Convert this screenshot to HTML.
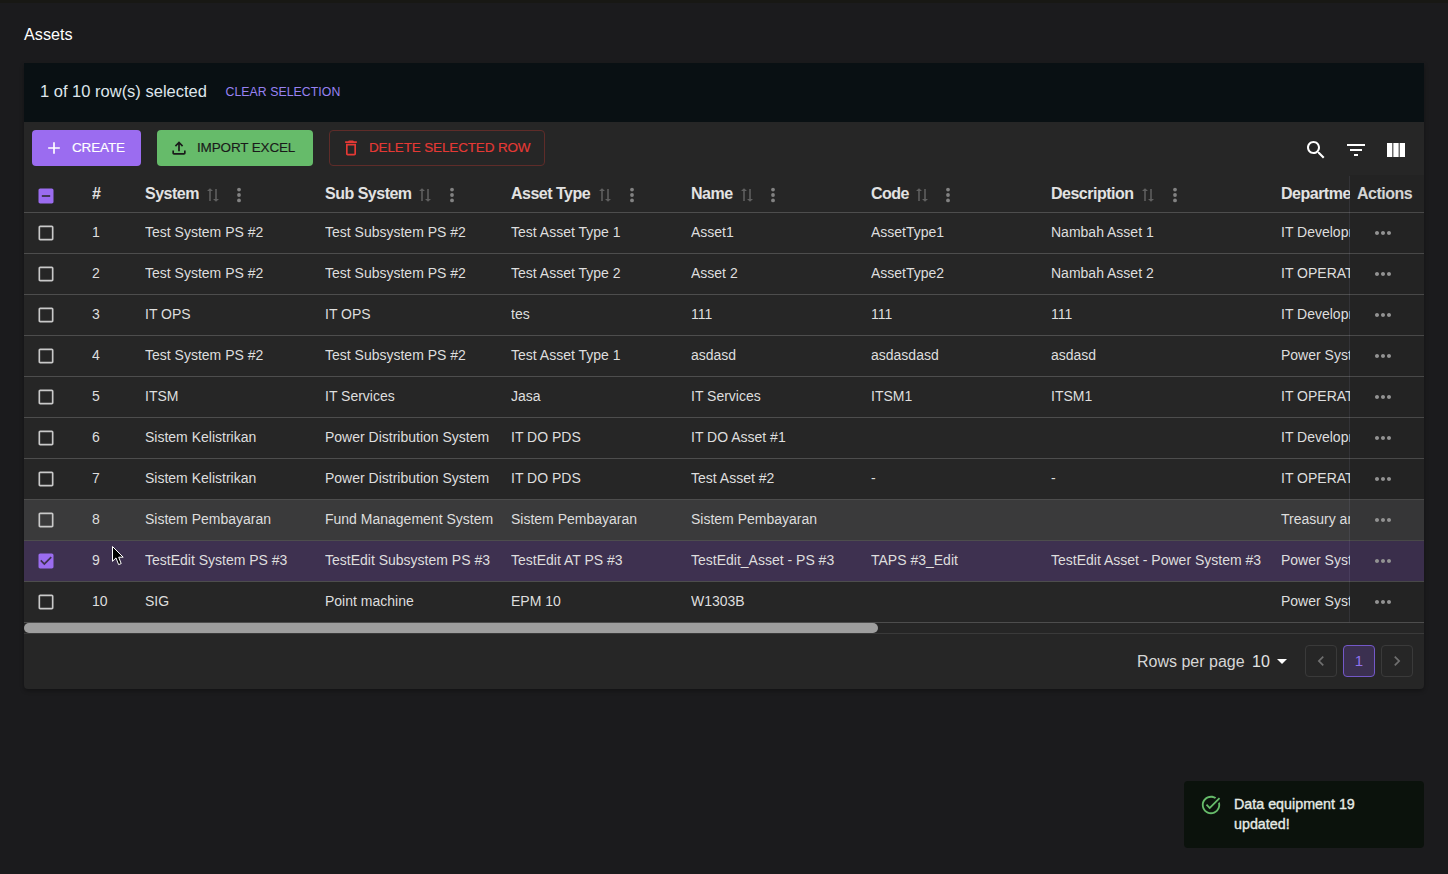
<!DOCTYPE html><html><head><meta charset="utf-8"><style>
*{box-sizing:border-box;margin:0;padding:0}
html,body{width:1448px;height:874px;overflow:hidden}
body{background:#1b1b1d;font-family:"Liberation Sans",sans-serif;color:#e4e4e4;position:relative}
.a{position:absolute}
#topstrip{left:0;top:0;width:1448px;height:3px;background:#181814}
#title{left:24px;top:24px;font-size:16.2px;line-height:20px;color:#fff}
#paper{left:24px;top:63px;width:1400px;height:626px;background:#262626;border-radius:0 0 4px 4px;box-shadow:0 2px 4px rgba(0,0,0,.3)}
#banner{left:24px;top:63px;width:1400px;height:59px;background:#091013}
#selt{left:40px;top:81px;font-size:16.5px;line-height:20px;color:#dfe6ec;white-space:nowrap}
#clr{left:225.5px;top:84px;font-size:12.3px;line-height:16px;color:#9882f2;letter-spacing:0.05px;white-space:nowrap}
.btn{top:130px;height:36px;border-radius:4px;font-size:13.5px;letter-spacing:-0.15px;line-height:35px;white-space:nowrap}
#b1{left:32px;width:109px;background:#9b6cf0;color:#fff;-webkit-text-stroke:0.15px #fff}
#b2{left:157px;width:156px;background:#66bb6a;color:#1a1a1a;-webkit-text-stroke:0.15px #1a1a1a}
#b3{left:329px;width:216px;border:1px solid #5f2c29;color:#e53935;line-height:33px;-webkit-text-stroke:0.15px #e53935}
.hc{top:175px;height:37px;line-height:37px;font-size:16px;letter-spacing:-0.5px;font-weight:bold;color:#e2e2e2;white-space:nowrap;overflow:hidden}
.hline{left:24px;width:1400px;height:1px;background:#4d4d4d}
.rw{left:24px;width:1400px;height:40px}
.hov{background:#3a3a3b}
.sel{background:#3e3150}
.c{height:40px;line-height:40px;font-size:14px;white-space:nowrap;overflow:hidden;color:#dedede}
#actsep{left:1349px;top:176px;width:1px;height:446px;background:rgba(190,190,230,0.09)}
#sbtrack{left:24px;top:633px;width:1400px;height:1px;background:#3a3a3a}
#sbthumb{left:24px;top:623px;width:854px;height:10px;background:#9e9e9e;border-radius:5px}
#rpp{left:1137px;top:652px;font-size:16px;line-height:20px;color:#d6d6d6;white-space:nowrap}
#rppv{left:1252px;top:652px;font-size:16px;line-height:20px;color:#e4e4e4}
.pb{top:645px;width:32px;height:32px;border:1px solid #3a3a3a;border-radius:4px;font-size:15px;line-height:30px;text-align:center}
.pb.cur{background:#3b3050;border-color:#7358c8;color:#8f72ee}
#toast{left:1184px;top:781px;width:240px;height:67px;background:#0b120c;border-radius:4px}
#toastt{left:1234px;top:794px;font-size:14.3px;line-height:20px;color:#e6ebe6;-webkit-text-stroke:0.35px #e6ebe6}
#actbg{left:1350px;top:175px;width:74px;height:447px;background:rgba(0,0,0,0.06)}

</style></head><body>
<div class="a" id="topstrip"></div>
<div class="a" id="title">Assets</div>
<div class="a" id="paper"></div>
<div class="a" id="banner"></div>
<div class="a" id="selt">1 of 10 row(s) selected</div>
<div class="a" id="clr">CLEAR SELECTION</div>
<div class="a btn" id="b1"><svg class="a" style="left:12px;top:8px" width="20" height="20" viewBox="0 0 24 24"><path fill="#fff" d="M19 13h-6v6h-2v-6H5v-2h6V5h2v6h6v2z"/></svg><span class="a tx" style="left:40px">CREATE</span></div>
<div class="a btn" id="b2"><svg class="a" style="left:12px;top:8px" width="20" height="20" viewBox="0 0 24 24"><path fill="#1a1a1a" d="M18 15v3H6v-3H4v3c0 1.1.9 2 2 2h12c1.1 0 2-.9 2-2v-3h-2zM7 9l1.41 1.41L11 7.83V16h2V7.83l2.59 2.58L17 9l-5-5-5 5z"/></svg><span class="a tx" style="left:40px">IMPORT EXCEL</span></div>
<div class="a btn" id="b3"><svg class="a" style="left:11px;top:7px" width="20" height="20" viewBox="0 0 24 24"><path fill="#e53935" d="M6 19c0 1.1.9 2 2 2h8c1.1 0 2-.9 2-2V7H6v12zM8 9h8v10H8V9zm7.5-5l-1-1h-5l-1 1H5v2h14V4z"/></svg><span class="a tx" style="left:39px">DELETE SELECTED ROW</span></div>
<svg class="a" style="left:1304px;top:138px" width="24" height="24" viewBox="0 0 24 24"><path fill="#fff" d="M15.5 14h-.79l-.28-.27C15.41 12.59 16 11.11 16 9.5 16 5.91 13.09 3 9.5 3S3 5.91 3 9.5 5.91 16 9.5 16c1.61 0 3.09-.59 4.23-1.57l.27.28v.79l5 4.99L20.49 19l-4.99-5zm-6 0C7.01 14 5 11.99 5 9.5S7.01 5 9.5 5 14 7.01 14 9.5 11.99 14 9.5 14z"/></svg>
<svg class="a" style="left:1344px;top:138px" width="24" height="24" viewBox="0 0 24 24"><path fill="#fff" d="M10 18h4v-2h-4v2zM3 6v2h18V6H3zm3 7h12v-2H6v2z"/></svg>
<svg class="a" style="left:1384px;top:138px" width="24" height="24" viewBox="0 0 24 24"><path fill="#fff" d="M14.67 5v14H9.33V5h5.34zm1 14H21V5h-5.33v14zm-7.34 0V5H3v14h5.33z"/></svg>
<svg class="a" style="left:36px;top:185.5px" width="20" height="20" viewBox="0 0 24 24"><path fill="#9b6cf0" d="M19 3H5c-1.1 0-2 .9-2 2v14c0 1.1.9 2 2 2h14c1.1 0 2-.9 2-2V5c0-1.1-.9-2-2-2zm-2 10H7v-2h10v2z"/></svg>
<div class="a hc" style="left:92px;width:50px">#</div>
<div class="a hc" style="left:145px;width:175px">System</div>
<svg class="a" style="left:203.9px;top:185.9px" width="18" height="18" viewBox="0 0 24 24"><g transform="rotate(-90 12 12) translate(12 12) scale(0.9 1) translate(-12 -12)"><path fill="rgba(255,255,255,0.27)" d="m18 12 4-4-4-4v3H3v2h15zM6 12l-4 4 4 4v-3h15v-2H6z"/></g></svg>
<svg class="a" style="left:236.2px;top:186px" width="6" height="18" viewBox="0 0 6 18"><circle cx="3" cy="3.6" r="1.9" fill="#828282"/><circle cx="3" cy="9" r="1.9" fill="#828282"/><circle cx="3" cy="14.4" r="1.9" fill="#828282"/></svg>
<div class="a hc" style="left:325px;width:183px">Sub System</div>
<svg class="a" style="left:416.0px;top:185.9px" width="18" height="18" viewBox="0 0 24 24"><g transform="rotate(-90 12 12) translate(12 12) scale(0.9 1) translate(-12 -12)"><path fill="rgba(255,255,255,0.27)" d="m18 12 4-4-4-4v3H3v2h15zM6 12l-4 4 4 4v-3h15v-2H6z"/></g></svg>
<svg class="a" style="left:448.9px;top:186px" width="6" height="18" viewBox="0 0 6 18"><circle cx="3" cy="3.6" r="1.9" fill="#828282"/><circle cx="3" cy="9" r="1.9" fill="#828282"/><circle cx="3" cy="14.4" r="1.9" fill="#828282"/></svg>
<div class="a hc" style="left:511px;width:175px">Asset Type</div>
<svg class="a" style="left:596.3px;top:185.9px" width="18" height="18" viewBox="0 0 24 24"><g transform="rotate(-90 12 12) translate(12 12) scale(0.9 1) translate(-12 -12)"><path fill="rgba(255,255,255,0.27)" d="m18 12 4-4-4-4v3H3v2h15zM6 12l-4 4 4 4v-3h15v-2H6z"/></g></svg>
<svg class="a" style="left:628.8px;top:186px" width="6" height="18" viewBox="0 0 6 18"><circle cx="3" cy="3.6" r="1.9" fill="#828282"/><circle cx="3" cy="9" r="1.9" fill="#828282"/><circle cx="3" cy="14.4" r="1.9" fill="#828282"/></svg>
<div class="a hc" style="left:691px;width:175px">Name</div>
<svg class="a" style="left:738.4px;top:185.9px" width="18" height="18" viewBox="0 0 24 24"><g transform="rotate(-90 12 12) translate(12 12) scale(0.9 1) translate(-12 -12)"><path fill="rgba(255,255,255,0.27)" d="m18 12 4-4-4-4v3H3v2h15zM6 12l-4 4 4 4v-3h15v-2H6z"/></g></svg>
<svg class="a" style="left:770.0px;top:186px" width="6" height="18" viewBox="0 0 6 18"><circle cx="3" cy="3.6" r="1.9" fill="#828282"/><circle cx="3" cy="9" r="1.9" fill="#828282"/><circle cx="3" cy="14.4" r="1.9" fill="#828282"/></svg>
<div class="a hc" style="left:871px;width:175px">Code</div>
<svg class="a" style="left:913.2px;top:185.9px" width="18" height="18" viewBox="0 0 24 24"><g transform="rotate(-90 12 12) translate(12 12) scale(0.9 1) translate(-12 -12)"><path fill="rgba(255,255,255,0.27)" d="m18 12 4-4-4-4v3H3v2h15zM6 12l-4 4 4 4v-3h15v-2H6z"/></g></svg>
<svg class="a" style="left:945.0px;top:186px" width="6" height="18" viewBox="0 0 6 18"><circle cx="3" cy="3.6" r="1.9" fill="#828282"/><circle cx="3" cy="9" r="1.9" fill="#828282"/><circle cx="3" cy="14.4" r="1.9" fill="#828282"/></svg>
<div class="a hc" style="left:1051px;width:225px">Description</div>
<svg class="a" style="left:1139.0px;top:185.9px" width="18" height="18" viewBox="0 0 24 24"><g transform="rotate(-90 12 12) translate(12 12) scale(0.9 1) translate(-12 -12)"><path fill="rgba(255,255,255,0.27)" d="m18 12 4-4-4-4v3H3v2h15zM6 12l-4 4 4 4v-3h15v-2H6z"/></g></svg>
<svg class="a" style="left:1171.8px;top:186px" width="6" height="18" viewBox="0 0 6 18"><circle cx="3" cy="3.6" r="1.9" fill="#828282"/><circle cx="3" cy="9" r="1.9" fill="#828282"/><circle cx="3" cy="14.4" r="1.9" fill="#828282"/></svg>
<div class="a hc" style="left:1281px;width:68.6px">Departme</div>
<div class="a hc" style="left:1357px;width:62px">Actions</div>
<div class="a hline" style="top:212px"></div>
<div class="a rw" style="top:213px"></div>
<svg class="a" style="left:36px;top:223px" width="20" height="20" viewBox="0 0 24 24"><path fill="#c9c9c9" d="M19 5v14H5V5h14m0-2H5c-1.11 0-2 .9-2 2v14c0 1.1.89 2 2 2h14c1.1 0 2-.9 2-2V5c0-1.1-.9-2-2-2z"/></svg>
<div class="a c" style="top:212px;left:92px;width:50px">1</div>
<div class="a c" style="top:212px;left:145px;width:175px">Test System PS #2</div>
<div class="a c" style="top:212px;left:325px;width:183px">Test Subsystem PS #2</div>
<div class="a c" style="top:212px;left:511px;width:175px">Test Asset Type 1</div>
<div class="a c" style="top:212px;left:691px;width:175px">Asset1</div>
<div class="a c" style="top:212px;left:871px;width:175px">AssetType1</div>
<div class="a c" style="top:212px;left:1051px;width:225px">Nambah Asset 1</div>
<div class="a c" style="top:212px;left:1281px;width:68.6px">IT Development</div>
<svg class="a" style="left:1371px;top:221px" width="24" height="24" viewBox="0 0 24 24"><path fill="#9c9c9c" d="M6 10c-1.1 0-2 .9-2 2s.9 2 2 2 2-.9 2-2-.9-2-2-2zm12 0c-1.1 0-2 .9-2 2s.9 2 2 2 2-.9 2-2-.9-2-2-2zm-6 0c-1.1 0-2 .9-2 2s.9 2 2 2 2-.9 2-2-.9-2-2-2z"/></svg>
<div class="a hline" style="top:253px"></div>
<div class="a rw" style="top:254px"></div>
<svg class="a" style="left:36px;top:264px" width="20" height="20" viewBox="0 0 24 24"><path fill="#c9c9c9" d="M19 5v14H5V5h14m0-2H5c-1.11 0-2 .9-2 2v14c0 1.1.89 2 2 2h14c1.1 0 2-.9 2-2V5c0-1.1-.9-2-2-2z"/></svg>
<div class="a c" style="top:253px;left:92px;width:50px">2</div>
<div class="a c" style="top:253px;left:145px;width:175px">Test System PS #2</div>
<div class="a c" style="top:253px;left:325px;width:183px">Test Subsystem PS #2</div>
<div class="a c" style="top:253px;left:511px;width:175px">Test Asset Type 2</div>
<div class="a c" style="top:253px;left:691px;width:175px">Asset 2</div>
<div class="a c" style="top:253px;left:871px;width:175px">AssetType2</div>
<div class="a c" style="top:253px;left:1051px;width:225px">Nambah Asset 2</div>
<div class="a c" style="top:253px;left:1281px;width:68.6px">IT OPERATION</div>
<svg class="a" style="left:1371px;top:262px" width="24" height="24" viewBox="0 0 24 24"><path fill="#9c9c9c" d="M6 10c-1.1 0-2 .9-2 2s.9 2 2 2 2-.9 2-2-.9-2-2-2zm12 0c-1.1 0-2 .9-2 2s.9 2 2 2 2-.9 2-2-.9-2-2-2zm-6 0c-1.1 0-2 .9-2 2s.9 2 2 2 2-.9 2-2-.9-2-2-2z"/></svg>
<div class="a hline" style="top:294px"></div>
<div class="a rw" style="top:295px"></div>
<svg class="a" style="left:36px;top:305px" width="20" height="20" viewBox="0 0 24 24"><path fill="#c9c9c9" d="M19 5v14H5V5h14m0-2H5c-1.11 0-2 .9-2 2v14c0 1.1.89 2 2 2h14c1.1 0 2-.9 2-2V5c0-1.1-.9-2-2-2z"/></svg>
<div class="a c" style="top:294px;left:92px;width:50px">3</div>
<div class="a c" style="top:294px;left:145px;width:175px">IT OPS</div>
<div class="a c" style="top:294px;left:325px;width:183px">IT OPS</div>
<div class="a c" style="top:294px;left:511px;width:175px">tes</div>
<div class="a c" style="top:294px;left:691px;width:175px">111</div>
<div class="a c" style="top:294px;left:871px;width:175px">111</div>
<div class="a c" style="top:294px;left:1051px;width:225px">111</div>
<div class="a c" style="top:294px;left:1281px;width:68.6px">IT Development</div>
<svg class="a" style="left:1371px;top:303px" width="24" height="24" viewBox="0 0 24 24"><path fill="#9c9c9c" d="M6 10c-1.1 0-2 .9-2 2s.9 2 2 2 2-.9 2-2-.9-2-2-2zm12 0c-1.1 0-2 .9-2 2s.9 2 2 2 2-.9 2-2-.9-2-2-2zm-6 0c-1.1 0-2 .9-2 2s.9 2 2 2 2-.9 2-2-.9-2-2-2z"/></svg>
<div class="a hline" style="top:335px"></div>
<div class="a rw" style="top:336px"></div>
<svg class="a" style="left:36px;top:346px" width="20" height="20" viewBox="0 0 24 24"><path fill="#c9c9c9" d="M19 5v14H5V5h14m0-2H5c-1.11 0-2 .9-2 2v14c0 1.1.89 2 2 2h14c1.1 0 2-.9 2-2V5c0-1.1-.9-2-2-2z"/></svg>
<div class="a c" style="top:335px;left:92px;width:50px">4</div>
<div class="a c" style="top:335px;left:145px;width:175px">Test System PS #2</div>
<div class="a c" style="top:335px;left:325px;width:183px">Test Subsystem PS #2</div>
<div class="a c" style="top:335px;left:511px;width:175px">Test Asset Type 1</div>
<div class="a c" style="top:335px;left:691px;width:175px">asdasd</div>
<div class="a c" style="top:335px;left:871px;width:175px">asdasdasd</div>
<div class="a c" style="top:335px;left:1051px;width:225px">asdasd</div>
<div class="a c" style="top:335px;left:1281px;width:68.6px">Power System</div>
<svg class="a" style="left:1371px;top:344px" width="24" height="24" viewBox="0 0 24 24"><path fill="#9c9c9c" d="M6 10c-1.1 0-2 .9-2 2s.9 2 2 2 2-.9 2-2-.9-2-2-2zm12 0c-1.1 0-2 .9-2 2s.9 2 2 2 2-.9 2-2-.9-2-2-2zm-6 0c-1.1 0-2 .9-2 2s.9 2 2 2 2-.9 2-2-.9-2-2-2z"/></svg>
<div class="a hline" style="top:376px"></div>
<div class="a rw" style="top:377px"></div>
<svg class="a" style="left:36px;top:387px" width="20" height="20" viewBox="0 0 24 24"><path fill="#c9c9c9" d="M19 5v14H5V5h14m0-2H5c-1.11 0-2 .9-2 2v14c0 1.1.89 2 2 2h14c1.1 0 2-.9 2-2V5c0-1.1-.9-2-2-2z"/></svg>
<div class="a c" style="top:376px;left:92px;width:50px">5</div>
<div class="a c" style="top:376px;left:145px;width:175px">ITSM</div>
<div class="a c" style="top:376px;left:325px;width:183px">IT Services</div>
<div class="a c" style="top:376px;left:511px;width:175px">Jasa</div>
<div class="a c" style="top:376px;left:691px;width:175px">IT Services</div>
<div class="a c" style="top:376px;left:871px;width:175px">ITSM1</div>
<div class="a c" style="top:376px;left:1051px;width:225px">ITSM1</div>
<div class="a c" style="top:376px;left:1281px;width:68.6px">IT OPERATION</div>
<svg class="a" style="left:1371px;top:385px" width="24" height="24" viewBox="0 0 24 24"><path fill="#9c9c9c" d="M6 10c-1.1 0-2 .9-2 2s.9 2 2 2 2-.9 2-2-.9-2-2-2zm12 0c-1.1 0-2 .9-2 2s.9 2 2 2 2-.9 2-2-.9-2-2-2zm-6 0c-1.1 0-2 .9-2 2s.9 2 2 2 2-.9 2-2-.9-2-2-2z"/></svg>
<div class="a hline" style="top:417px"></div>
<div class="a rw" style="top:418px"></div>
<svg class="a" style="left:36px;top:428px" width="20" height="20" viewBox="0 0 24 24"><path fill="#c9c9c9" d="M19 5v14H5V5h14m0-2H5c-1.11 0-2 .9-2 2v14c0 1.1.89 2 2 2h14c1.1 0 2-.9 2-2V5c0-1.1-.9-2-2-2z"/></svg>
<div class="a c" style="top:417px;left:92px;width:50px">6</div>
<div class="a c" style="top:417px;left:145px;width:175px">Sistem Kelistrikan</div>
<div class="a c" style="top:417px;left:325px;width:183px">Power Distribution System</div>
<div class="a c" style="top:417px;left:511px;width:175px">IT DO PDS</div>
<div class="a c" style="top:417px;left:691px;width:175px">IT DO Asset #1</div>
<div class="a c" style="top:417px;left:1281px;width:68.6px">IT Development</div>
<svg class="a" style="left:1371px;top:426px" width="24" height="24" viewBox="0 0 24 24"><path fill="#9c9c9c" d="M6 10c-1.1 0-2 .9-2 2s.9 2 2 2 2-.9 2-2-.9-2-2-2zm12 0c-1.1 0-2 .9-2 2s.9 2 2 2 2-.9 2-2-.9-2-2-2zm-6 0c-1.1 0-2 .9-2 2s.9 2 2 2 2-.9 2-2-.9-2-2-2z"/></svg>
<div class="a hline" style="top:458px"></div>
<div class="a rw" style="top:459px"></div>
<svg class="a" style="left:36px;top:469px" width="20" height="20" viewBox="0 0 24 24"><path fill="#c9c9c9" d="M19 5v14H5V5h14m0-2H5c-1.11 0-2 .9-2 2v14c0 1.1.89 2 2 2h14c1.1 0 2-.9 2-2V5c0-1.1-.9-2-2-2z"/></svg>
<div class="a c" style="top:458px;left:92px;width:50px">7</div>
<div class="a c" style="top:458px;left:145px;width:175px">Sistem Kelistrikan</div>
<div class="a c" style="top:458px;left:325px;width:183px">Power Distribution System</div>
<div class="a c" style="top:458px;left:511px;width:175px">IT DO PDS</div>
<div class="a c" style="top:458px;left:691px;width:175px">Test Asset #2</div>
<div class="a c" style="top:458px;left:871px;width:175px">-</div>
<div class="a c" style="top:458px;left:1051px;width:225px">-</div>
<div class="a c" style="top:458px;left:1281px;width:68.6px">IT OPERATION</div>
<svg class="a" style="left:1371px;top:467px" width="24" height="24" viewBox="0 0 24 24"><path fill="#9c9c9c" d="M6 10c-1.1 0-2 .9-2 2s.9 2 2 2 2-.9 2-2-.9-2-2-2zm12 0c-1.1 0-2 .9-2 2s.9 2 2 2 2-.9 2-2-.9-2-2-2zm-6 0c-1.1 0-2 .9-2 2s.9 2 2 2 2-.9 2-2-.9-2-2-2z"/></svg>
<div class="a hline" style="top:499px"></div>
<div class="a rw hov" style="top:500px"></div>
<svg class="a" style="left:36px;top:510px" width="20" height="20" viewBox="0 0 24 24"><path fill="#c9c9c9" d="M19 5v14H5V5h14m0-2H5c-1.11 0-2 .9-2 2v14c0 1.1.89 2 2 2h14c1.1 0 2-.9 2-2V5c0-1.1-.9-2-2-2z"/></svg>
<div class="a c" style="top:499px;left:92px;width:50px">8</div>
<div class="a c" style="top:499px;left:145px;width:175px">Sistem Pembayaran</div>
<div class="a c" style="top:499px;left:325px;width:183px">Fund Management System</div>
<div class="a c" style="top:499px;left:511px;width:175px">Sistem Pembayaran</div>
<div class="a c" style="top:499px;left:691px;width:175px">Sistem Pembayaran</div>
<div class="a c" style="top:499px;left:1281px;width:68.6px">Treasury and</div>
<svg class="a" style="left:1371px;top:508px" width="24" height="24" viewBox="0 0 24 24"><path fill="#9c9c9c" d="M6 10c-1.1 0-2 .9-2 2s.9 2 2 2 2-.9 2-2-.9-2-2-2zm12 0c-1.1 0-2 .9-2 2s.9 2 2 2 2-.9 2-2-.9-2-2-2zm-6 0c-1.1 0-2 .9-2 2s.9 2 2 2 2-.9 2-2-.9-2-2-2z"/></svg>
<div class="a hline" style="top:540px"></div>
<div class="a rw sel" style="top:541px"></div>
<svg class="a" style="left:36px;top:551px" width="20" height="20" viewBox="0 0 24 24"><path fill="#9b6cf0" d="M19 3H5c-1.11 0-2 .9-2 2v14c0 1.1.89 2 2 2h14c1.11 0 2-.9 2-2V5c0-1.1-.89-2-2-2zm-9 14l-5-5 1.41-1.41L10 14.17l7.59-7.59L19 8l-9 9z"/></svg>
<div class="a c" style="top:540px;left:92px;width:50px">9</div>
<div class="a c" style="top:540px;left:145px;width:175px">TestEdit System PS #3</div>
<div class="a c" style="top:540px;left:325px;width:183px">TestEdit Subsystem PS #3</div>
<div class="a c" style="top:540px;left:511px;width:175px">TestEdit AT PS #3</div>
<div class="a c" style="top:540px;left:691px;width:175px">TestEdit_Asset - PS #3</div>
<div class="a c" style="top:540px;left:871px;width:175px">TAPS #3_Edit</div>
<div class="a c" style="top:540px;left:1051px;width:225px">TestEdit Asset - Power System #3</div>
<div class="a c" style="top:540px;left:1281px;width:68.6px">Power System</div>
<svg class="a" style="left:1371px;top:549px" width="24" height="24" viewBox="0 0 24 24"><path fill="#9c9c9c" d="M6 10c-1.1 0-2 .9-2 2s.9 2 2 2 2-.9 2-2-.9-2-2-2zm12 0c-1.1 0-2 .9-2 2s.9 2 2 2 2-.9 2-2-.9-2-2-2zm-6 0c-1.1 0-2 .9-2 2s.9 2 2 2 2-.9 2-2-.9-2-2-2z"/></svg>
<div class="a hline" style="top:581px"></div>
<div class="a rw" style="top:582px"></div>
<svg class="a" style="left:36px;top:592px" width="20" height="20" viewBox="0 0 24 24"><path fill="#c9c9c9" d="M19 5v14H5V5h14m0-2H5c-1.11 0-2 .9-2 2v14c0 1.1.89 2 2 2h14c1.1 0 2-.9 2-2V5c0-1.1-.9-2-2-2z"/></svg>
<div class="a c" style="top:581px;left:92px;width:50px">10</div>
<div class="a c" style="top:581px;left:145px;width:175px">SIG</div>
<div class="a c" style="top:581px;left:325px;width:183px">Point machine</div>
<div class="a c" style="top:581px;left:511px;width:175px">EPM 10</div>
<div class="a c" style="top:581px;left:691px;width:175px">W1303B</div>
<div class="a c" style="top:581px;left:1281px;width:68.6px">Power System</div>
<svg class="a" style="left:1371px;top:590px" width="24" height="24" viewBox="0 0 24 24"><path fill="#9c9c9c" d="M6 10c-1.1 0-2 .9-2 2s.9 2 2 2 2-.9 2-2-.9-2-2-2zm12 0c-1.1 0-2 .9-2 2s.9 2 2 2 2-.9 2-2-.9-2-2-2zm-6 0c-1.1 0-2 .9-2 2s.9 2 2 2 2-.9 2-2-.9-2-2-2z"/></svg>
<div class="a hline" style="top:622px"></div>
<div class="a" id="actbg"></div>
<div class="a" id="actsep"></div>
<div class="a" id="sbtrack"></div>
<div class="a" id="sbthumb"></div>
<div class="a" id="rpp">Rows per page</div>
<div class="a" id="rppv">10</div>
<svg class="a" style="left:1270px;top:649px" width="24" height="24" viewBox="0 0 24 24"><path fill="#fff" d="M7 10l5 5 5-5z"/></svg>
<div class="a pb" style="left:1305px"><svg class="a" style="left:5px;top:5px" width="20" height="20" viewBox="0 0 24 24"><path d="M15.41 7.41L14 6l-6 6 6 6 1.41-1.41L10.83 12z" fill="#6f6f6f"/></svg></div>
<div class="a pb cur" style="left:1343px">1</div>
<div class="a pb" style="left:1381px"><svg class="a" style="left:5px;top:5px" width="20" height="20" viewBox="0 0 24 24"><path d="M10 6L8.59 7.41 13.17 12l-4.58 4.59L10 18l6-6z" fill="#6f6f6f"/></svg></div>
<div class="a" id="toast"></div>
<svg class="a" style="left:1199.6px;top:794px" width="22" height="22" viewBox="0 0 24 24"><path fill="#66bb6a" d="M22 5.18 10.59 16.6l-4.24-4.24 1.41-1.41 2.83 2.83 10-10L22 5.18zm-2.21 5.04c.13.57.21 1.17.21 1.78 0 4.42-3.58 8-8 8s-8-3.58-8-8 3.58-8 8-8c1.58 0 3.04.46 4.28 1.25l1.44-1.44C16.1 2.67 14.13 2 12 2 6.48 2 2 6.48 2 12s4.48 10 10 10 10-4.48 10-10c0-1.19-.22-2.33-.6-3.39l-1.61 1.61z"/></svg>
<div class="a" id="toastt">Data equipment 19<br>updated!</div>
<svg class="a" style="left:112px;top:546px" width="13" height="20" viewBox="0 0 13 20"><path d="M0.5 0.5V15.3L4 11.9L6.6 18.6L9.2 17.6L6.7 11.2H11.2Z" fill="#000" stroke="#fff" stroke-width="1" stroke-linejoin="miter"/></svg>
</body></html>
